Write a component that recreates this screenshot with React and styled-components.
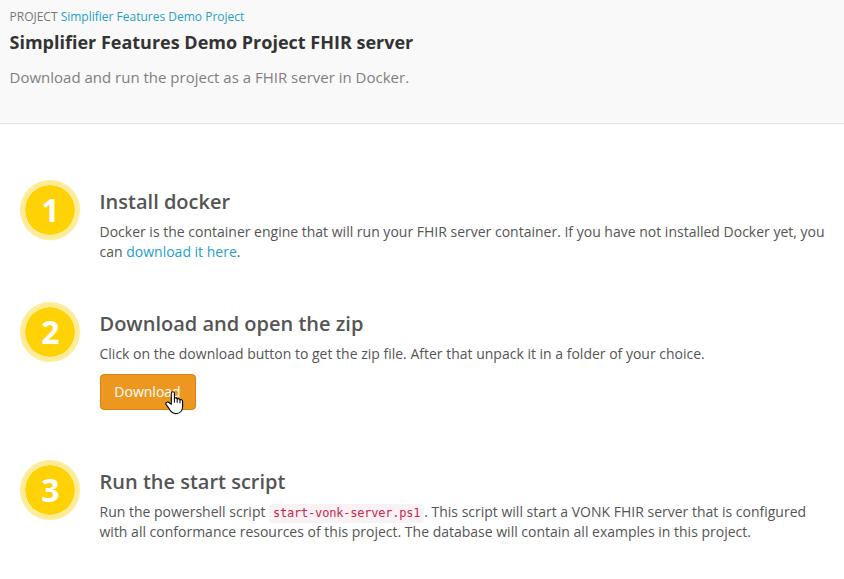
import React from "react";
import styled, { createGlobalStyle } from "styled-components";

const Global = createGlobalStyle`
  * { box-sizing: border-box; }
  body { margin: 0; background: #fff; color: #555; font: 14px/20px "Open Sans", sans-serif; }
  h1, h2, p { margin: 0; }
`;
const Page = styled.div`height: 579px; overflow: hidden;`;
const Header = styled.header`height: 124px; padding: 7px 9.5px 0; background: #f9f9f9; border-bottom: 1px solid #ddd;`;
const Crumb = styled.div`font-size: 12px; line-height: 20px; color: #777;`;
const Link = styled.a`color: #25a0c5; text-decoration: none;`;
const Title = styled.h1`font-size: 18px; line-height: 24px; font-weight: 700; color: #333; margin-top: 3px;`;
const Lead = styled.p`font-size: 15px; line-height: 20px; color: #808080; margin-top: 13px;`;
const Steps = styled.main`padding: 56px 10px 0 20px;`;
const Step = styled.section`display: flex; gap: 19.5px; height: ${p => p.$height}px;`;
const Badge = styled.div`
  width: 60px; height: 60px; flex: none; border-radius: 50%; border: 5px solid #ffec99; background: #ffd205;
  background-clip: padding-box; padding-left: 1px;
  display: flex; align-items: center; justify-content: center; color: #fff; font-size: 32px; font-weight: 700;
`;
const Content = styled.div`flex: 1; padding-top: 8px;`;
const Heading = styled.h2`font-size: 20px; line-height: 28px; font-weight: 600; margin-bottom: 6px;`;
const Code = styled.code`font: 12px/16px "DejaVu Sans Mono", monospace; letter-spacing: -0.22px; color: #c7254e; background: #f9f2f4; border-radius: 4px; padding: 2px 4px 3px;`;
const Button = styled.button`
  position: relative; display: block; width: 96px; height: 36px; margin: 10px 0 0 0.5px; padding: 0 1px 0 0;
  background: #ed9720; border: 1px solid #d88412; border-radius: 4px; color: #fff; font: 14px/20px "Open Sans", sans-serif;
`;
const Pointer = styled.svg`position: absolute; left: 64px; top: 15px; width: 19px; height: 25px;`;

export default function App() {
  return <Page><Global />
    <Header>
      <Crumb>PROJECT <Link>Simplifier Features Demo Project</Link></Crumb>
      <Title>Simplifier Features Demo Project FHIR server</Title>
      <Lead>Download and run the project as a FHIR server in Docker.</Lead>
    </Header>
    <Steps>
      <Step $height={122}><Badge>1</Badge><Content><Heading>Install docker</Heading>
        <p>Docker is the container engine that will run your FHIR server container. If you have not installed Docker yet, you can <Link>download it here</Link>.</p>
      </Content></Step>
      <Step $height={158}><Badge>2</Badge><Content><Heading>Download and open the zip</Heading>
        <p>Click on the download button to get the zip file. After that unpack it in a folder of your choice.</p>
        <Button>Download
          <Pointer viewBox="0 0 19 25">
            <path d="M6.3 14.2V3.2C6.3 1.2 9.4 1.2 9.4 3.2V8.2C10.9 7.4 12 7.9 12.2 9C13.5 8.2 14.7 8.7 15 9.8C16.5 9.1 17.6 10.2 17.6 11.5V16.5C17.6 20.8 14.8 23.6 11 23.6C7.2 23.6 5.5 21.5 3.8 18.2L1.2 14.6C.2 13 2 11.3 3.6 12.3Z" fill="#fff" stroke="#000" strokeWidth="1.1" strokeLinejoin="round"/>
            <path d="M9.4 8V12.7M12.2 9V12.7M15 10V13.3" fill="none" stroke="#000"/>
          </Pointer>
        </Button>
      </Content></Step>
      <Step $height={100}><Badge>3</Badge><Content><Heading>Run the start script</Heading>
        <p>Run the powershell script <Code>start-vonk-server.ps1</Code>. This script will start a VONK FHIR server that is configured with all conformance resources of this project. The database will contain all examples in this project.</p>
      </Content></Step>
    </Steps>
  </Page>;
}
